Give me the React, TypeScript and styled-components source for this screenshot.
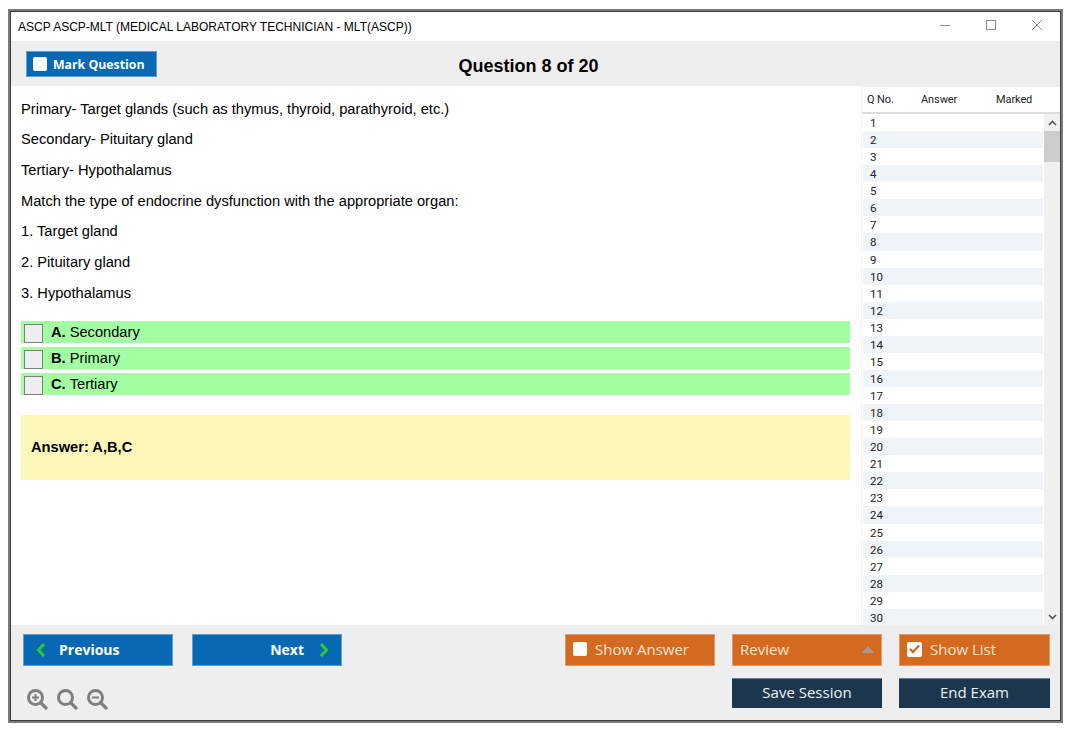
import React from 'react';
import styled, { createGlobalStyle } from 'styled-components';

const GlobalStyle = createGlobalStyle`
  html, body { margin: 0; padding: 0; background: #fff; }
  body { font-family: "Liberation Sans", Arial, sans-serif; color: #000; }
`;

const Page = styled.div`
  width: 1075px;
  height: 735px;
  box-sizing: border-box;
  padding: 9px 12px 12px 8px;
`;

const Window = styled.div`
  height: 100%;
  box-sizing: border-box;
  border: 2px solid #7c7c7c;
`;

const Frame = styled.div`
  height: 100%;
  box-sizing: border-box;
  border: 1px solid #3c3c3c;
  display: flex;
  flex-direction: column;
  background: #fff;
`;

const TitleBar = styled.div`
  height: 29px;
  flex: none;
  display: flex;
  align-items: center;
  justify-content: space-between;
  padding: 0 17px 0 7px;
  font-size: 12px;
`;

const WindowControls = styled.div`
  display: flex;
  gap: 34px;
  margin-bottom: 3px;
  color: #8a8a8a;
`;

const Toolbar = styled.div`
  height: 45px;
  flex: none;
  box-sizing: border-box;
  background: #eeeeee;
  display: grid;
  grid-template-columns: 1fr auto 1fr;
  align-items: start;
  padding: 10px 29px 0 15px;
`;

const ButtonBase = styled.div`
  box-sizing: border-box;
  display: flex;
  align-items: center;
  font-family: "Open Sans", sans-serif;
  color: #fff;
  font-size: 15px;
`;

const MarkButton = styled(ButtonBase)`
  width: 131px;
  height: 26px;
  background: #0868b3;
  border: 1px solid #5b9fd3;
  padding-left: 6px;
  gap: 6px;
  font-size: 12.3px;
  font-weight: 700;
`;

const BlankBox = styled.span`
  width: 14px;
  height: 14px;
  border-radius: 2px;
  background: #fff;
  flex: none;
`;

const QuestionTitle = styled.div`
  font-size: 18px;
  font-weight: 700;
  line-height: 30px;
`;

const Main = styled.div`
  flex: 1;
  min-height: 0;
  display: flex;
`;

const Content = styled.div`
  flex: 1;
  min-width: 0;
  padding: 14.5px 11px 0 10px;
`;

const Paragraph = styled.p`
  margin: 0 0 13.7px;
  font-size: 14.67px;
  line-height: 17px;
`;

const Options = styled.div`
  display: flex;
  flex-direction: column;
  gap: 4px;
  margin-top: 19.5px;
`;

const Option = styled.div`
  height: 22px;
  background: #a2ffa2;
  display: flex;
  align-items: flex-start;
  padding-left: 3px;
  font-size: 14.67px;
  line-height: 23px;
`;

const OptionBox = styled.span`
  width: 19px;
  height: 19px;
  margin: 3px 8px 0 0;
  box-sizing: border-box;
  border: 1px solid #7f7f7f;
  background: #eeeeee;
  flex: none;
`;

const OptionKey = styled.b`
  margin-right: 4px;
`;

const AnswerBox = styled.div`
  height: 65px;
  margin-top: 20px;
  background: #fdf7b9;
  display: flex;
  align-items: center;
  padding: 0 10px 2px;
  box-sizing: border-box;
  font-size: 14.67px;
  font-weight: 700;
`;

const ListPanel = styled.div`
  width: 199px;
  flex: none;
  display: flex;
  flex-direction: column;
  box-sizing: border-box;
  border-top: 1px solid #eeeeee;
  border-left: 1px solid #f4f4f4;
  font-family: Roboto, sans-serif;
  font-size: 11.5px;
  color: #222;
  overflow: hidden;
`;

const ListHeader = styled.div`
  height: 27px;
  flex: none;
  box-sizing: border-box;
  border-bottom: 2px solid #dedede;
  display: grid;
  grid-template-columns: 54px 75px auto;
  padding-left: 5px;
  align-items: center;
  font-size: 11px;
  letter-spacing: -0.1px;
`;

const ListBody = styled.div`
  flex: 1;
  min-height: 0;
  display: flex;
`;

const Rows = styled.div`
  flex: 1;
  min-width: 0;
  margin-left: 1px;
  overflow: hidden;
`;

const Row = styled.div<{ $alt: boolean }>`
  height: 17.07px;
  line-height: 18px;
  padding-left: 7px;
  background: ${(p) => (p.$alt ? '#eff4f9' : '#fff')};
`;

const Scrollbar = styled.div`
  width: 16px;
  flex: none;
  margin-left: 1px;
  background: #f0f0f0;
  display: flex;
  flex-direction: column;
`;

const ScrollArrow = styled.div`
  height: 17px;
  flex: none;
  display: flex;
  align-items: center;
  justify-content: center;
  background: #f0f0f0;
  color: #555;
`;

const ScrollThumb = styled.div`
  height: 31px;
  flex: none;
  background: #cdcdcd;
`;

const ScrollTrack = styled.div`
  flex: 1;
`;

const Footer = styled.div`
  height: 95px;
  flex: none;
  box-sizing: border-box;
  background: #eeeeee;
  padding: 9px 10px 0 12px;
  display: flex;
  flex-direction: column;
  gap: 12px;
`;

const FooterRow = styled.div`
  display: flex;
  justify-content: space-between;
  align-items: flex-start;
`;

const ButtonGroup = styled.div<{ $gap: number }>`
  display: flex;
  gap: ${(p) => p.$gap}px;
`;

const NavButton = styled(ButtonBase)<{ $next?: boolean }>`
  width: 150px;
  height: 32px;
  background: #0868b3;
  border: 1px solid #5b9fd3;
  font-size: 14px;
  font-weight: 700;
  justify-content: ${(p) => (p.$next ? 'flex-end' : 'flex-start')};
  padding: 0 12px 1px;
  gap: ${(p) => (p.$next ? 15 : 13)}px;
`;

const OrangeButton = styled(ButtonBase)<{ $wide?: boolean }>`
  width: ${(p) => (p.$wide ? 151 : 150)}px;
  height: 32px;
  background: #d46a20;
  border: 1px solid #e39a63;
  padding: 0 7px 2px;
  gap: 8px;
  color: #f6e3d3;
`;

const ReviewLabel = styled.span`
  flex: 1;
`;

const NavyButton = styled(ButtonBase)<{ $wide?: boolean }>`
  width: ${(p) => (p.$wide ? 151 : 150)}px;
  height: 30px;
  background: #1c364d;
  border-top: 1px solid #6d8194;
  justify-content: center;
  padding-bottom: 3px;
  color: #eef2f5;
`;

const ZoomGroup = styled.div`
  display: flex;
  gap: 9px;
  margin: 11px 0 0 4px;
  color: #7f7f7f;
`;

const CheckedBox = styled(BlankBox)`
  width: 15px;
  height: 15px;
  display: flex;
  align-items: center;
  justify-content: center;
  color: #d46a20;
`;

function Magnifier({ mark }: { mark: 'plus' | 'minus' | 'none' }) {
  return (
    <svg width="21" height="21" viewBox="0 0 21 21" fill="none" stroke="currentColor" strokeWidth="3">
      <circle cx="8.5" cy="8.5" r="7" />
      <path d="M13.5 13.5 L20 20" strokeWidth="3.2" />
      {mark !== 'none' && <path d="M5 8.5 H12" strokeWidth="2" />}
      {mark === 'plus' && <path d="M8.5 5 V12" strokeWidth="2" />}
    </svg>
  );
}

function Chevron({ left }: { left?: boolean }) {
  return (
    <svg width="10" height="14" viewBox="0 0 10 14" fill="none" stroke="#2ccb2c" strokeWidth="3">
      <path d={left ? 'M8 1 L2.5 7 L8 13' : 'M2 1 L7.5 7 L2 13'} />
    </svg>
  );
}

const questionLines = [
  'Primary- Target glands (such as thymus, thyroid, parathyroid, etc.)',
  'Secondary- Pituitary gland',
  'Tertiary- Hypothalamus',
  'Match the type of endocrine dysfunction with the appropriate organ:',
  '1. Target gland',
  '2. Pituitary gland',
  '3. Hypothalamus',
];

const options = [
  { key: 'A.', text: 'Secondary' },
  { key: 'B.', text: 'Primary' },
  { key: 'C.', text: 'Tertiary' },
];

const rowNumbers = Array.from({ length: 30 }, (_, i) => i + 1);

export default function App() {
  return (
    <Page>
      <GlobalStyle />
      <Window>
        <Frame>
          <TitleBar>
            <span>ASCP ASCP-MLT (MEDICAL LABORATORY TECHNICIAN - MLT(ASCP))</span>
            <WindowControls>
              <svg width="12" height="12" viewBox="0 0 12 12" stroke="currentColor" fill="none">
                <path d="M1 6.5 H11" />
              </svg>
              <svg width="12" height="12" viewBox="0 0 12 12" stroke="currentColor" fill="none">
                <rect x="1.5" y="1.5" width="9" height="9" />
              </svg>
              <svg width="12" height="12" viewBox="0 0 12 12" stroke="currentColor" fill="none">
                <path d="M1 1 L11 11 M11 1 L1 11" />
              </svg>
            </WindowControls>
          </TitleBar>
          <Toolbar>
            <MarkButton>
              <BlankBox />
              Mark Question
            </MarkButton>
            <QuestionTitle>Question 8 of 20</QuestionTitle>
          </Toolbar>
          <Main>
            <Content>
              {questionLines.map((line) => (
                <Paragraph key={line}>{line}</Paragraph>
              ))}
              <Options>
                {options.map((o) => (
                  <Option key={o.key}>
                    <OptionBox />
                    <OptionKey>{o.key}</OptionKey>
                    {o.text}
                  </Option>
                ))}
              </Options>
              <AnswerBox>Answer: A,B,C</AnswerBox>
            </Content>
            <ListPanel>
              <ListHeader>
                <span>Q No.</span>
                <span>Answer</span>
                <span>Marked</span>
              </ListHeader>
              <ListBody>
                <Rows>
                  {rowNumbers.map((n) => (
                    <Row key={n} $alt={n % 2 === 0}>{n}</Row>
                  ))}
                </Rows>
                <Scrollbar>
                  <ScrollArrow>
                    <svg width="9" height="6" viewBox="0 0 9 6" fill="none" stroke="currentColor" strokeWidth="1.6">
                      <path d="M1 5 L4.5 1.5 L8 5" />
                    </svg>
                  </ScrollArrow>
                  <ScrollThumb />
                  <ScrollTrack />
                  <ScrollArrow>
                    <svg width="9" height="6" viewBox="0 0 9 6" fill="none" stroke="currentColor" strokeWidth="1.6">
                      <path d="M1 1 L4.5 4.5 L8 1" />
                    </svg>
                  </ScrollArrow>
                </Scrollbar>
              </ListBody>
            </ListPanel>
          </Main>
          <Footer>
            <FooterRow>
              <ButtonGroup $gap={19}>
                <NavButton>
                  <Chevron left />
                  Previous
                </NavButton>
                <NavButton $next>
                  Next
                  <Chevron />
                </NavButton>
              </ButtonGroup>
              <ButtonGroup $gap={17}>
                <OrangeButton>
                  <BlankBox />
                  Show Answer
                </OrangeButton>
                <OrangeButton>
                  <ReviewLabel>Review</ReviewLabel>
                  <svg width="12" height="7" viewBox="0 0 12 7" fill="#a89a90">
                    <path d="M6 0 L12 7 H0 Z" />
                  </svg>
                </OrangeButton>
                <OrangeButton $wide>
                  <CheckedBox>
                    <svg width="11" height="10" viewBox="0 0 11 10" fill="none" stroke="currentColor" strokeWidth="2.4">
                      <path d="M1 5 L4 8 L10 1.5" />
                    </svg>
                  </CheckedBox>
                  Show List
                </OrangeButton>
              </ButtonGroup>
            </FooterRow>
            <FooterRow>
              <ZoomGroup>
                <Magnifier mark="plus" />
                <Magnifier mark="none" />
                <Magnifier mark="minus" />
              </ZoomGroup>
              <ButtonGroup $gap={17}>
                <NavyButton>Save Session</NavyButton>
                <NavyButton $wide>End Exam</NavyButton>
              </ButtonGroup>
            </FooterRow>
          </Footer>
        </Frame>
      </Window>
    </Page>
  );
}
